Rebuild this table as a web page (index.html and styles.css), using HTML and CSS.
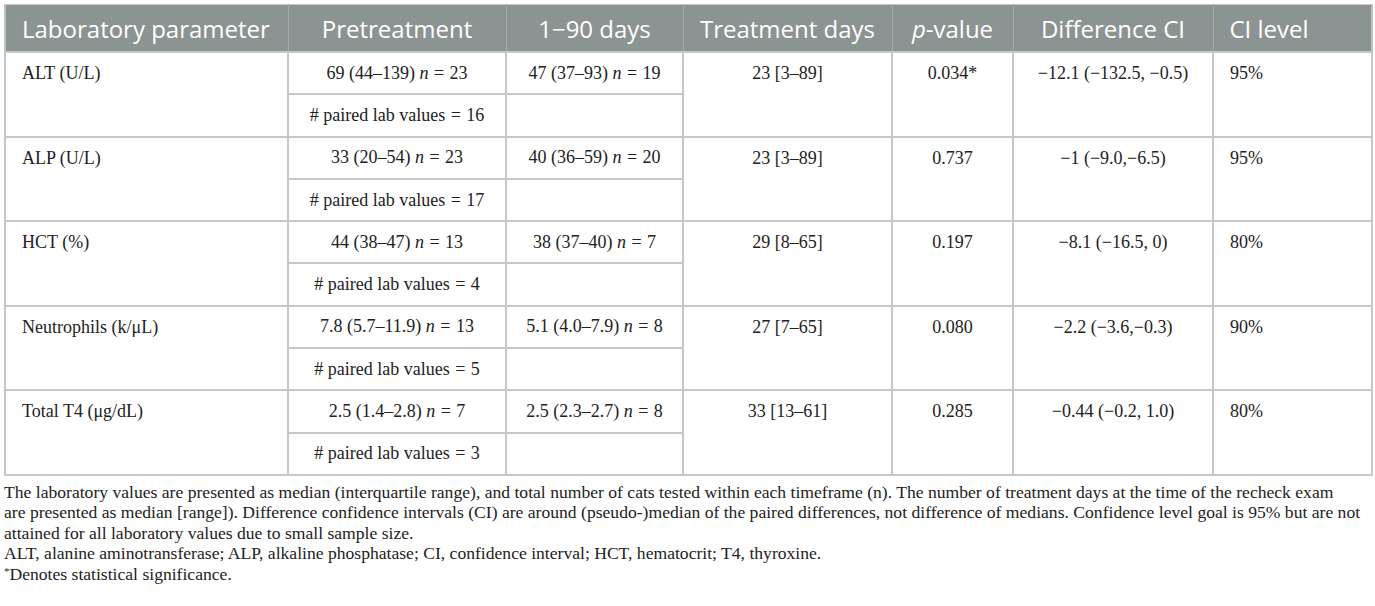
FILE: index.html
```html
<!DOCTYPE html>
<html>
<head>
<meta charset="utf-8">
<link rel="stylesheet" href="styles.css">
</head>
<body>
<div class="wrap">
<table class="lab">
  <colgroup>
    <col class="c1"><col class="c2"><col class="c3"><col class="c4"><col class="c5"><col class="c6"><col class="c7">
  </colgroup>
  <thead>
    <tr>
      <th class="left">Laboratory parameter</th>
      <th>Pretreatment</th>
      <th>1−90 days</th>
      <th>Treatment days</th>
      <th><i>p</i>-value</th>
      <th>Difference CI</th>
      <th class="left">CI level</th>
    </tr>
  </thead>
  <tbody>
    <tr>
      <td rowspan="2" class="left top">ALT (U/L)</td>
      <td>69 (44–139) <i>n</i> <span class="eq">=</span> 23</td>
      <td>47 (37–93) <i>n</i> <span class="eq">=</span> 19</td>
      <td rowspan="2" class="top">23 [3–89]</td>
      <td rowspan="2" class="top">0.034*</td>
      <td rowspan="2" class="top">−12.1 (−132.5, −0.5)</td>
      <td rowspan="2" class="left top">95%</td>
    </tr>
    <tr><td># paired lab values <span class="eq">=</span> 16</td><td></td></tr>
    <tr>
      <td rowspan="2" class="left top">ALP (U/L)</td>
      <td>33 (20–54) <i>n</i> <span class="eq">=</span> 23</td>
      <td>40 (36–59) <i>n</i> <span class="eq">=</span> 20</td>
      <td rowspan="2" class="top">23 [3–89]</td>
      <td rowspan="2" class="top">0.737</td>
      <td rowspan="2" class="top">−1 (−9.0,−6.5)</td>
      <td rowspan="2" class="left top">95%</td>
    </tr>
    <tr><td># paired lab values <span class="eq">=</span> 17</td><td></td></tr>
    <tr>
      <td rowspan="2" class="left top">HCT (%)</td>
      <td>44 (38–47) <i>n</i> <span class="eq">=</span> 13</td>
      <td>38 (37–40) <i>n</i> <span class="eq">=</span> 7</td>
      <td rowspan="2" class="top">29 [8–65]</td>
      <td rowspan="2" class="top">0.197</td>
      <td rowspan="2" class="top">−8.1 (−16.5, 0)</td>
      <td rowspan="2" class="left top">80%</td>
    </tr>
    <tr><td># paired lab values <span class="eq">=</span> 4</td><td></td></tr>
    <tr>
      <td rowspan="2" class="left top">Neutrophils (k/μL)</td>
      <td>7.8 (5.7–11.9) <i>n</i> <span class="eq">=</span> 13</td>
      <td>5.1 (4.0–7.9) <i>n</i> <span class="eq">=</span> 8</td>
      <td rowspan="2" class="top">27 [7–65]</td>
      <td rowspan="2" class="top">0.080</td>
      <td rowspan="2" class="top">−2.2 (−3.6,−0.3)</td>
      <td rowspan="2" class="left top">90%</td>
    </tr>
    <tr><td># paired lab values <span class="eq">=</span> 5</td><td></td></tr>
    <tr>
      <td rowspan="2" class="left top">Total T4 (μg/dL)</td>
      <td>2.5 (1.4–2.8) <i>n</i> <span class="eq">=</span> 7</td>
      <td>2.5 (2.3–2.7) <i>n</i> <span class="eq">=</span> 8</td>
      <td rowspan="2" class="top">33 [13–61]</td>
      <td rowspan="2" class="top">0.285</td>
      <td rowspan="2" class="top">−0.44 (−0.2, 1.0)</td>
      <td rowspan="2" class="left top">80%</td>
    </tr>
    <tr><td># paired lab values <span class="eq">=</span> 3</td><td></td></tr>
  </tbody>
</table>
<div class="notes">
  <p>The laboratory values are presented as median (interquartile range), and total number of cats tested within each timeframe (n). The number of treatment days at the time of the recheck exam<br>are presented as median [range]). Difference confidence intervals (CI) are around (pseudo-)median of the paired differences, not difference of medians. Confidence level goal is 95% but are not<br>attained for all laboratory values due to small sample size.</p>
  <p>ALT, alanine aminotransferase; ALP, alkaline phosphatase; CI, confidence interval; HCT, hematocrit; T4, thyroxine.</p>
  <p><sup>*</sup>Denotes statistical significance.</p>
</div>
</div>
</body>
</html>
```

FILE: styles.css
```css
html, body {
  margin: 0;
  padding: 0;
  background: #ffffff;
}

.wrap {
  padding: 4px 4px 0 4px;
  width: 1367px;
}

.lab {
  width: 1367px;
  border-collapse: collapse;
  table-layout: fixed;
  border: 2px solid #bcc3c0;
  border-top: 1px solid #c9cfcc;
}

.c1 { width: 283px; }
.c2 { width: 218px; }
.c3 { width: 177px; }
.c4 { width: 209px; }
.c5 { width: 121px; }
.c6 { width: 200px; }
.c7 { width: 159px; }

.lab th {
  background: #8b9393;
  color: #ffffff;
  font-family: "Open Sans", "DejaVu Sans", sans-serif;
  font-weight: 400;
  font-size: 24px;
  height: 46px;
  padding: 0 6px;
  text-align: center;
  border-left: 1px solid #a4abab;
  white-space: nowrap;
}

.lab th:first-child { border-left: none; }

.lab th.left { text-align: left; padding-left: 16px; }

.lab td {
  font-family: "Liberation Serif", "Times New Roman", serif;
  font-size: 18px;
  color: #222222;
  height: 40.3px;
  padding: 0 6px;
  text-align: center;
  vertical-align: middle;
  border: 2px solid #c3c9c6;
  white-space: nowrap;
}

.lab td.top {
  vertical-align: top;
  padding-top: 10px;
}

.lab td.left {
  text-align: left;
  padding-left: 16px;
}

.eq {
  margin: 0 1px;
}

.notes {
  font-family: "Liberation Serif", "Times New Roman", serif;
  font-size: 17.6px;
  line-height: 20.5px;
  color: #222222;
  padding-top: 6px;
  width: 1371px;
}

.notes p {
  margin: 0;
}

.notes sup {
  font-size: 11px;
  vertical-align: 5px;
  line-height: 0;
}
```
